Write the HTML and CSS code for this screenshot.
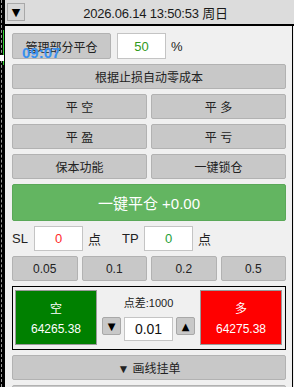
FILE: index.html
```html
<!DOCTYPE html>
<html lang="zh">
<head>
<meta charset="utf-8"/>
<title>一键交易面板</title>
<link rel="stylesheet" href="styles.css">
</head>
<body>
<div class="edge">
  <span class="edge-line"></span>
  <span class="edge-mark"></span>
</div>
<div class="panel">
  <header class="top">
    <button class="drop">▼</button>
    <div class="clock">2026.06.14 13:50:53 周日</div>
  </header>
  <div class="body">
    <span class="timer">09:07</span>
    <div class="row part">
      <button class="btn part-btn">管理部分平仓</button>
      <input class="field pct" type="text" value="50"/>
      <span class="unit">%</span>
    </div>
    <button class="btn">根据止损自动零成本</button>
    <div class="row two">
      <button class="btn">平 空</button>
      <button class="btn">平 多</button>
    </div>
    <div class="row two">
      <button class="btn">平 盈</button>
      <button class="btn">平 亏</button>
    </div>
    <div class="row two">
      <button class="btn">保本功能</button>
      <button class="btn">一键锁仓</button>
    </div>
    <button class="close-all">一键平仓 +0.00</button>
    <div class="row sltp">
      <div class="group">
        <span class="lbl">SL</span>
        <input class="field sl" type="text" value="0"/>
        <span class="unit">点</span>
      </div>
      <div class="group">
        <span class="lbl">TP</span>
        <input class="field tp" type="text" value="0"/>
        <span class="unit">点</span>
      </div>
    </div>
    <div class="row four">
      <button class="btn">0.05</button>
      <button class="btn">0.1</button>
      <button class="btn">0.2</button>
      <button class="btn">0.5</button>
    </div>
    <div class="trade">
      <div class="side sell">
        <span>空</span>
        <span>64265.38</span>
      </div>
      <div class="mid">
        <div class="spread">点差:1000</div>
        <div class="lots">
          <button class="step">▼</button>
          <input class="field lot" type="text" value="0.01"/>
          <button class="step">▲</button>
        </div>
      </div>
      <div class="side buy">
        <span>多</span>
        <span>64275.38</span>
      </div>
    </div>
    <button class="btn">▼ 画线挂单</button>
    <button class="btn"></button>
  </div>
</div>
</body>
</html>
```

FILE: styles.css
```css
body {
  margin: 0;
  height: 387px;
  overflow: hidden;
  background: #000;
  display: flex;
  font-family: 'Liberation Sans', 'Noto Sans CJK SC', sans-serif;
  font-size: 12px;
  color: #222;
}
.edge {
  width: 5px;
  flex: none;
  position: relative;
}
.edge::before {
  content: '';
  position: absolute;
  left: 1px;
  top: 0;
  bottom: 0;
  border-left: 1px dashed #9a9a9a;
}
.edge-line {
  position: absolute;
  left: 3px;
  top: 30px;
  width: 1px;
  height: 35px;
  background: #2fd02f;
}
.edge-mark {
  position: absolute;
  left: 0;
  top: 55px;
  width: 4px;
  height: 6px;
  background: #fff;
}
.panel {
  flex: 1;
  background: #f0f0f0;
  display: flex;
  flex-direction: column;
}
.top {
  height: 24px;
  flex: none;
  background: #dcdcdc;
  border-bottom: 2px solid #000;
  display: flex;
  align-items: center;
  padding-left: 2px;
}
.drop {
  width: 18px;
  height: 18px;
  padding: 0;
  background: #d8d8d8;
  border: 1px solid #a8a8a8;
  font-family: 'DejaVu Sans', sans-serif;
  font-size: 11px;
  color: #000;
}
.clock {
  flex: 1;
  text-align: center;
  font-size: 13px;
  color: #1a1a1a;
  padding-right: 8px;
  letter-spacing: -0.2px;
}
.body {
  flex: 1;
  position: relative;
  margin-right: 1px;
  border-right: 1px solid #000;
  padding: 7px 6px 0 7px;
  display: flex;
  flex-direction: column;
  gap: 5px;
}
.timer {
  position: absolute;
  left: 17px;
  top: 18px;
  font-size: 15px;
  font-weight: bold;
  color: #3a90ee;
}
.btn {
  height: 25px;
  flex: none;
  padding: 0;
  background: #c8c8c8;
  border: 1px solid #b2b2b2;
  border-radius: 2px;
  font: inherit;
  color: #222;
}
.row {
  display: flex;
  align-items: center;
}
.part {
  height: 26px;
}
.part-btn {
  width: 99px;
  height: 26px;
}
.field {
  box-sizing: border-box;
  height: 26px;
  border: 1px solid #c4c4c4;
  background: #fff;
  text-align: center;
  font: inherit;
  font-size: 13px;
  padding: 0;
  outline: none;
}
.pct {
  width: 49px;
  margin-left: 6px;
  color: #2f9a1c;
}
.unit {
  margin-left: 5px;
  font-size: 13px;
}
.two {
  display: grid;
  grid-template-columns: 1fr 1fr;
  gap: 4px;
}
.four {
  display: grid;
  grid-template-columns: repeat(4, 1fr);
  gap: 4px;
}
.close-all {
  height: 37px;
  flex: none;
  background: #63b561;
  border: 1px solid #5aa858;
  border-radius: 2px;
  color: #fff;
  font: inherit;
  font-size: 15px;
}
.sltp {
  height: 25px;
}
.group {
  width: 110px;
  display: flex;
  align-items: center;
}
.lbl {
  width: 22px;
  font-size: 13px;
}
.sl, .tp {
  width: 49px;
  height: 25px;
}
.sl {
  color: #ff2a2a;
}
.tp {
  color: #1f9f3a;
}
.trade {
  height: 64px;
  box-sizing: border-box;
  flex: none;
  border: 1px solid #000;
  padding: 3px 3px 4px 2px;
  display: flex;
}
.side {
  width: 82px;
  box-sizing: border-box;
  border: 1px solid #9a9a9a;
  display: flex;
  flex-direction: column;
  align-items: center;
  justify-content: center;
  gap: 6px;
  color: #fff;
}
.sell {
  background: #008000;
}
.buy {
  background: #ff0000;
}
.mid {
  flex: 1;
  display: flex;
  flex-direction: column;
  align-items: center;
  padding-top: 4px;
}
.spread {
  font-size: 11px;
  height: 16px;
}
.lots {
  display: flex;
  align-items: flex-start;
  gap: 3px;
  margin-top: 7px;
}
.step {
  width: 19px;
  height: 18px;
  padding: 0;
  background: #c8c8c8;
  border: 1px solid #a8a8a8;
  border-radius: 2px;
  font-family: 'DejaVu Sans', sans-serif;
  font-size: 10px;
  color: #000;
}
.lot {
  width: 49px;
  height: 24px;
  font-size: 14px;
  color: #111;
}
```
